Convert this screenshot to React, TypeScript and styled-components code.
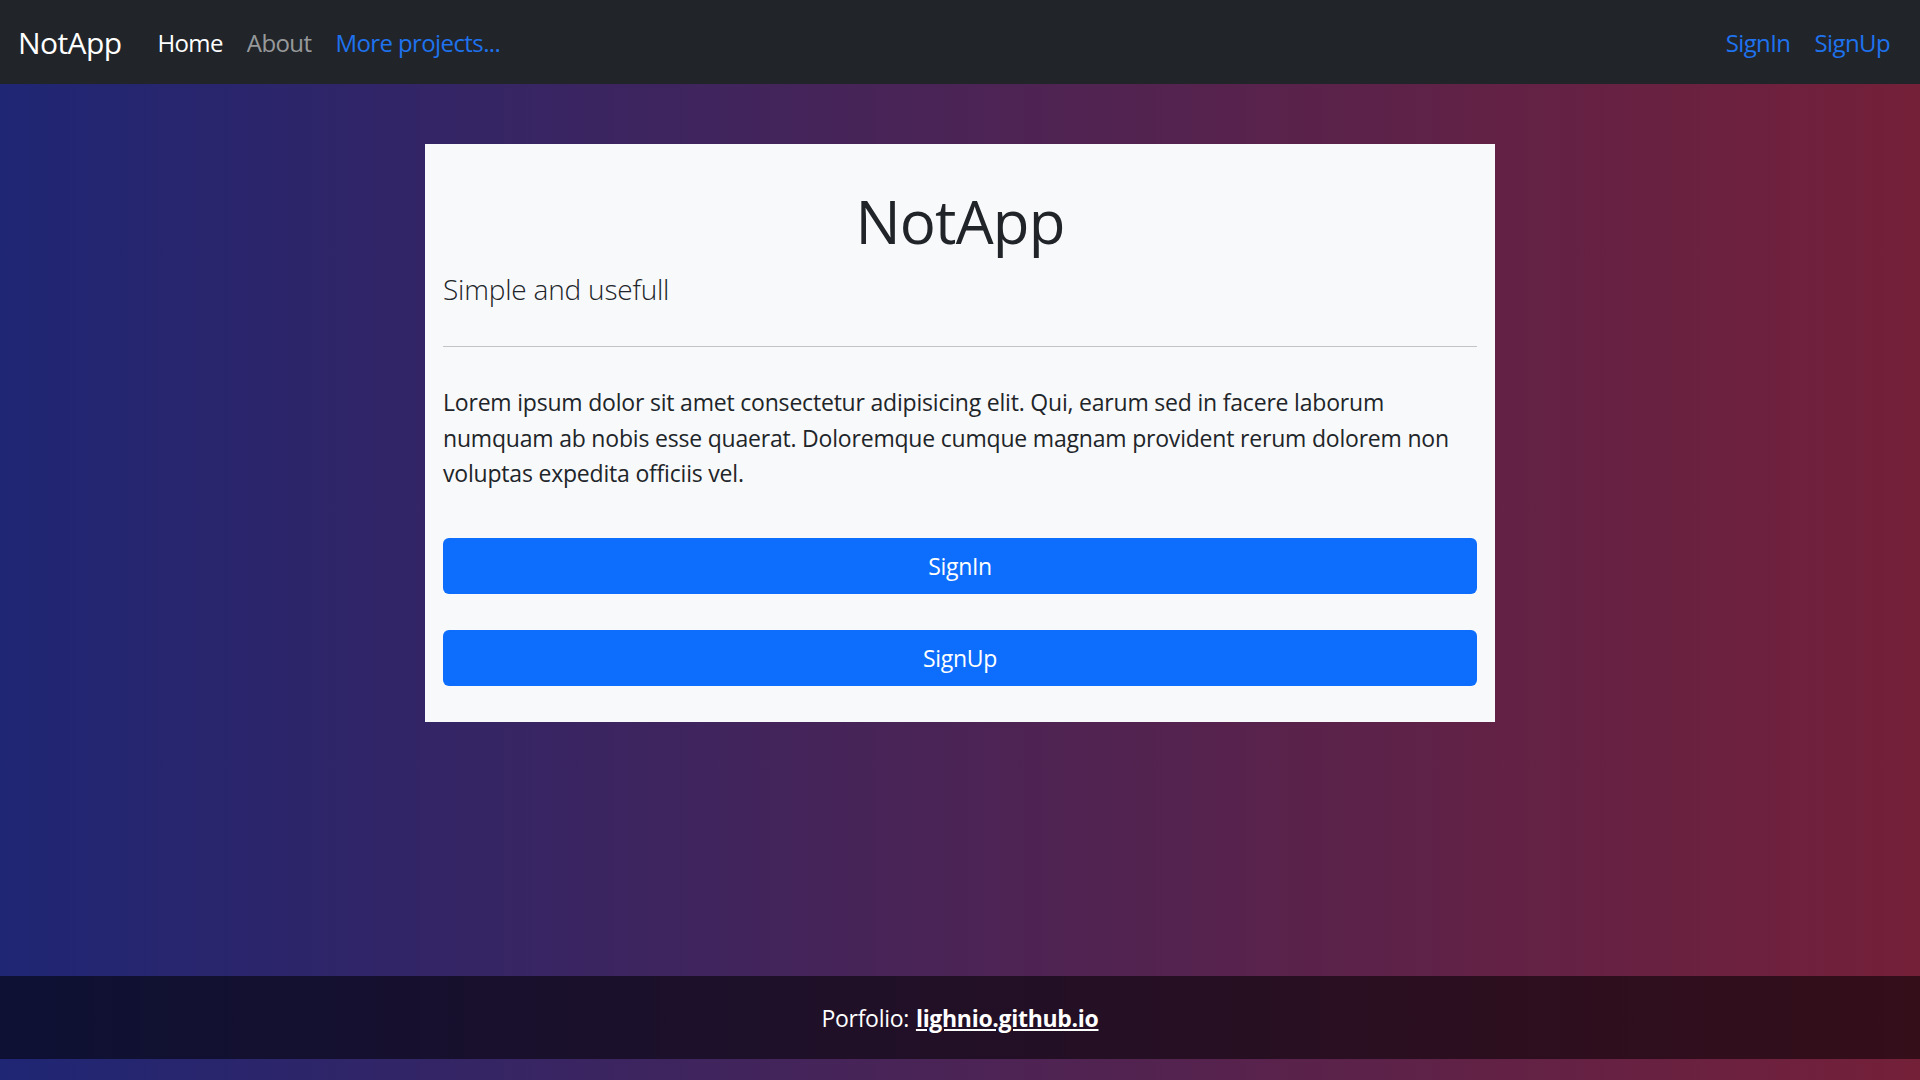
import styled, { createGlobalStyle } from "styled-components";

const GlobalStyle = createGlobalStyle`
  * {
    box-sizing: border-box;
  }
  body {
    margin: 0;
    font-family: "Open Sans", "Noto Sans", sans-serif;
    color: #212529;
  }
`;

const Page = styled.div`
  min-height: 100vh;
  display: flex;
  flex-direction: column;
  background: linear-gradient(to right, #1f2674, #472458 45%, #742039);
`;

const NavBar = styled.nav`
  height: 84px;
  flex-shrink: 0;
  background: #212529;
  display: flex;
  align-items: center;
  justify-content: space-between;
  padding: 0 18px;
`;

const NavGroup = styled.div`
  display: flex;
  align-items: center;
`;

const Brand = styled.a`
  font-size: 30px;
  color: #fff;
  text-decoration: none;
  margin-right: 24px;
  letter-spacing: -0.6px;
`;

const NavLink = styled.a<{ $tone: "active" | "muted" | "link" }>`
  font-size: 24px;
  padding: 0 12px;
  text-decoration: none;
  letter-spacing: -0.6px;
  color: ${(p) =>
    p.$tone === "active" ? "#fff" : p.$tone === "muted" ? "rgba(255,255,255,0.55)" : "#1f72ee"};
`;

const Main = styled.main`
  flex: 1;
  display: flex;
  justify-content: center;
  align-items: flex-start;
  padding-top: 60px;
`;

const Card = styled.section`
  width: 1070px;
  background: #f8f9fa;
  padding: 41px 18px 36px;
  display: flex;
  flex-direction: column;
`;

const Title = styled.h1`
  margin: 0 0 10px;
  font-size: 60px;
  line-height: 72px;
  font-weight: 400;
  text-align: center;
  letter-spacing: -0.8px;
`;

const Lead = styled.p`
  margin: 0;
  font-size: 28px;
  line-height: 45px;
  font-weight: 300;
  letter-spacing: -0.2px;
`;

const Divider = styled.hr`
  margin: 34px 0 0;
  border: 0;
  border-top: 1px solid #c3c4c6;
`;

const Text = styled.p`
  margin: 38px 0 46px;
  font-size: 23px;
  line-height: 35.5px;
  letter-spacing: -0.2px;
`;

const Actions = styled.div`
  display: flex;
  flex-direction: column;
  gap: 36px;
`;

const Button = styled.button`
  height: 56px;
  border: 0;
  border-radius: 6px;
  background: #0d6efd;
  color: #fff;
  font-family: inherit;
  font-size: 23px;
  letter-spacing: -0.3px;
  cursor: pointer;
`;

const Footer = styled.footer`
  height: 83px;
  flex-shrink: 0;
  margin-bottom: 21px;
  background: rgba(0, 0, 0, 0.55);
  display: flex;
  align-items: center;
  justify-content: center;
  color: #fff;
  font-size: 23px;
  letter-spacing: -0.3px;
`;

const FooterLink = styled.a`
  color: #fff;
  font-weight: 700;
  margin-left: 7px;
`;

export default function App() {
  return (
    <Page>
      <GlobalStyle />
      <NavBar>
        <NavGroup>
          <Brand href="#">NotApp</Brand>
          <NavLink $tone="active" href="#">Home</NavLink>
          <NavLink $tone="muted" href="#">About</NavLink>
          <NavLink $tone="link" href="#">More projects...</NavLink>
        </NavGroup>
        <NavGroup>
          <NavLink $tone="link" href="#">SignIn</NavLink>
          <NavLink $tone="link" href="#">SignUp</NavLink>
        </NavGroup>
      </NavBar>
      <Main>
        <Card>
          <Title>NotApp</Title>
          <Lead>Simple and usefull</Lead>
          <Divider />
          <Text>
            Lorem ipsum dolor sit amet consectetur adipisicing elit. Qui, earum sed in facere laborum
            numquam ab nobis esse quaerat. Doloremque cumque magnam provident rerum dolorem non
            voluptas expedita officiis vel.
          </Text>
          <Actions>
            <Button>SignIn</Button>
            <Button>SignUp</Button>
          </Actions>
        </Card>
      </Main>
      <Footer>
        Porfolio:<FooterLink href="#">lighnio.github.io</FooterLink>
      </Footer>
    </Page>
  );
}
